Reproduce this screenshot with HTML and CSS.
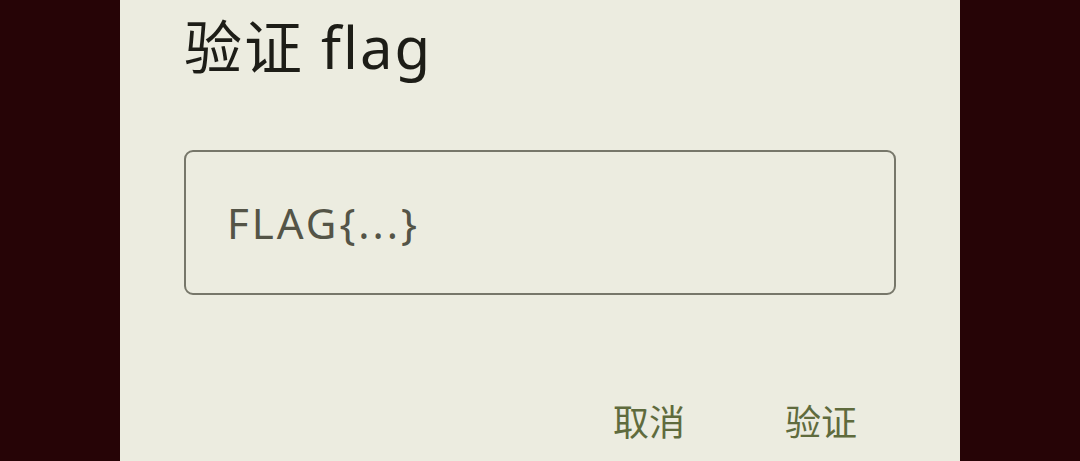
FILE: index.html
```html
<!DOCTYPE html>
<html lang="zh">
<head>
<meta charset="utf-8">
<link rel="stylesheet" href="styles.css">
</head>
<body>
<div class="dialog">
  <h1 class="title">验证 flag</h1>
  <div class="field"><span class="value">FLAG{...}</span></div>
  <div class="actions">
    <span class="btn">取消</span>
    <span class="btn">验证</span>
  </div>
</div>
</body>
</html>
```
FILE: styles.css
```css
html, body {
  margin: 0;
  padding: 0;
  background: #260406;
  width: 1080px;
  height: 461px;
  overflow: hidden;
}
.dialog {
  box-sizing: border-box;
  margin-top: -30px;
  margin-left: 120px;
  width: 840px;
  height: 491px;
  background: #ecece0;
  border-radius: 30px 30px 0 0;
  padding: 0 64px;
  display: flex;
  flex-direction: column;
  font-family: "Noto Sans", "Noto Sans CJK SC", sans-serif;
}
.title {
  margin: 45px 0 0 0;
  font-size: 58px;
  line-height: 64px;
  font-weight: 400;
  color: #1d1d17;
  letter-spacing: 2px;
}
.field {
  margin-top: 71px;
  height: 141px;
  border: 2px solid #77776a;
  border-radius: 9px;
  display: flex;
  align-items: center;
  padding-left: 41px;
}
.value {
  font-size: 42px;
  color: #545447;
  letter-spacing: 3px;
}
.actions {
  margin-top: 105px;
  display: flex;
  justify-content: flex-end;
  gap: 100px;
  padding-right: 39px;
}
.btn {
  font-family: "Noto Sans CJK SC", sans-serif;
  font-size: 36px;
  line-height: 40px;
  color: #5f6b3d;
}
```
